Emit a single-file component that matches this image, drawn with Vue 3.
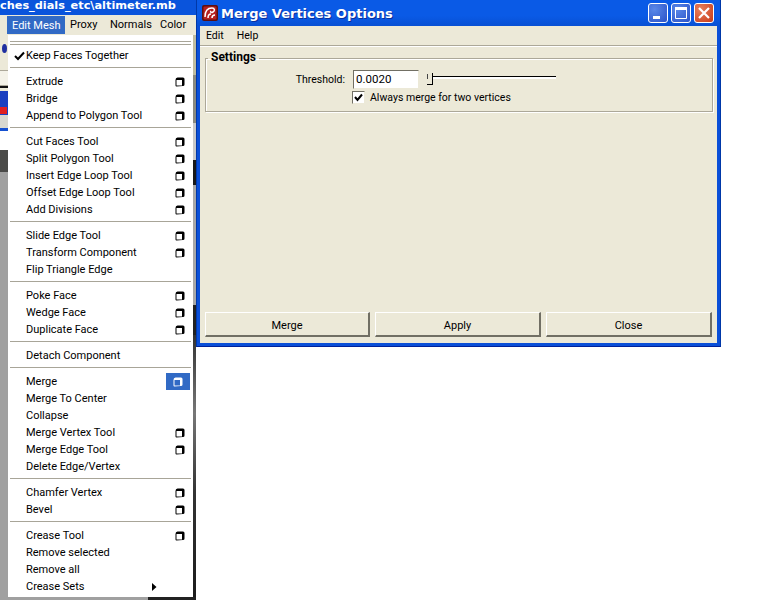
<template>
  <div class="desktop">
    <!-- Maya main window, mostly hidden behind the open menu -->
    <div class="maya">
      <div class="maya-title">ches_dials_etc\altimeter.mb</div>
      <div class="maya-menubar">
        <span class="maya-menu active">Edit Mesh</span>
        <span class="maya-menu proxy">Proxy</span>
        <span class="maya-menu normals">Normals</span>
        <span class="maya-menu">Color</span>
      </div>
      <div class="maya-body">
        <div class="left-strip">
          <div class="scrap beige"><i class="blue-glyph"></i></div>
          <div class="scrap field"></div>
          <div class="scrap black-line"></div>
          <div class="scrap icons"><i class="red-glyph"></i></div>
          <div class="scrap grey"></div>
          <div class="scrap blue-line"></div>
          <div class="scrap white"></div>
          <div class="scrap cube"></div>
          <div class="scrap rest"></div>
        </div>
        <div class="menu">
          <div class="tearoff"></div>
          <template v-for="(group, g) in menuGroups" :key="g">
            <div v-if="g > 0" class="sep"></div>
            <div v-for="item in group" :key="item.name" class="menu-row">
              <svg v-if="item.checked" class="check" width="11" height="10" viewBox="0 0 11 10">
                <path d="M1 5 L4 8 L10 1.5" fill="none" stroke="#000" stroke-width="2" />
              </svg>
              <span class="menu-label">{{ item.name }}</span>
              <svg v-if="item.sub" class="arrow" width="5" height="8" viewBox="0 0 5 8">
                <path d="M0 0 L4.5 4 L0 8 Z" fill="#000" />
              </svg>
              <span v-if="item.option" class="opt" :class="{ hot: item.hot }">
                <svg width="10" height="10" viewBox="0 0 10 10">
                  <path d="M2.5 0.5 H8 Q9.5 0.5 9.5 2 V7.5 Q9.5 9 8 9 L1.5 9.5 Q0.5 9.5 0.5 8.5 V3 Q0.5 0.5 2.5 0.5 Z" :fill="item.hot ? '#fff' : '#000'" />
                  <rect x="1.5" y="3" width="5.5" height="5.5" :fill="item.hot ? '#316ac5' : '#fff'" />
                </svg>
              </span>
            </div>
          </template>
        </div>
        <div class="right-strip">
          <div class="rs rs-a"></div>
          <div class="rs rs-b"></div>
          <div class="rs rs-c"></div>
          <div class="rs rs-d"></div>
          <div class="rs rs-e"></div>
          <div class="rs rs-f"></div>
          <div class="rs rs-g"></div>
        </div>
      </div>
      <div class="maya-bottom"><div class="bottom-grey"></div><div class="bottom-dark"></div></div>
    </div>

    <!-- option dialog -->
    <div class="dialog">
      <div class="titlebar">
        <svg class="app-icon" width="16" height="16" viewBox="0 0 16 16">
          <rect width="16" height="16" rx="2" fill="#5c1010" />
          <rect x="1.5" y="1.5" width="13" height="13" rx="1" fill="#b52020" />
          <path d="M3 12 C3 6 6 3 10 3 C13 3 13 6 11 7 C9 8 8 7 9 6 M6 13 C6 10 7 9 9 9 M10 13 C10 11 11 10 13 10" fill="none" stroke="#fff" stroke-width="1.5" />
        </svg>
        <span class="title-text">Merge Vertices Options</span>
        <div class="caption-btns">
          <span class="cap blue">
            <svg width="20" height="20" viewBox="0 0 20 20"><rect x="5" y="13" width="7" height="3" fill="#fff" /></svg>
          </span>
          <span class="cap blue">
            <svg width="20" height="20" viewBox="0 0 20 20"><path d="M4.5 5 H15.5 V15.5 H4.5 Z" fill="none" stroke="#fff" /><rect x="4" y="4" width="12" height="3" fill="#fff" /></svg>
          </span>
          <span class="cap red">
            <svg width="20" height="20" viewBox="0 0 20 20"><path d="M5 5 L15 15 M15 5 L5 15" stroke="#fff" stroke-width="2.2" /></svg>
          </span>
        </div>
      </div>
      <div class="client">
        <div class="dlg-menubar">
          <span>Edit</span>
          <span>Help</span>
        </div>
        <div class="content">
          <fieldset class="settings">
            <legend>Settings</legend>
            <div class="threshold-row">
              <label class="thr-label">Threshold:</label>
              <input class="thr-input" type="text" value="0.0020" />
              <div class="slider">
                <div class="slider-tick"></div>
                <div class="slider-handle"></div>
                <div class="slider-track"></div>
              </div>
            </div>
            <div class="check-row">
              <span class="checkbox">
                <svg width="9" height="9" viewBox="0 0 9 9"><path d="M1 4 L3.5 7 L8 1.5" fill="none" stroke="#000" stroke-width="2" /></svg>
              </span>
              <span>Always merge for two vertices</span>
            </div>
          </fieldset>
          <div class="buttons">
            <button v-for="b in buttons" :key="b" class="dlg-btn">{{ b }}</button>
          </div>
        </div>
      </div>
    </div>
  </div>
</template>

<script setup>
const opt = (name) => ({ name, option: true })
const plain = (name) => ({ name })

const menuGroups = [
  [{ name: 'Keep Faces Together', checked: true }],
  [opt('Extrude'), opt('Bridge'), opt('Append to Polygon Tool')],
  [opt('Cut Faces Tool'), opt('Split Polygon Tool'), opt('Insert Edge Loop Tool'), opt('Offset Edge Loop Tool'), opt('Add Divisions')],
  [opt('Slide Edge Tool'), opt('Transform Component'), plain('Flip Triangle Edge')],
  [opt('Poke Face'), opt('Wedge Face'), opt('Duplicate Face')],
  [plain('Detach Component')],
  [
    { name: 'Merge', option: true, hot: true },
    plain('Merge To Center'),
    plain('Collapse'),
    opt('Merge Vertex Tool'),
    opt('Merge Edge Tool'),
    plain('Delete Edge/Vertex'),
  ],
  [opt('Chamfer Vertex'), opt('Bevel')],
  [opt('Crease Tool'), plain('Remove selected'), plain('Remove all'), { name: 'Crease Sets', sub: true }],
]

const buttons = ['Merge', 'Apply', 'Close']
</script>

<style>
html, body {
  margin: 0;
  background: #fff;
}
</style>

<style scoped>
.desktop {
  position: relative;
  width: 783px;
  height: 600px;
  overflow: hidden;
  background: #fff;
  font-family: Roboto, "Liberation Sans", sans-serif;
  font-size: 11px;
  color: #000;
}

/* ---- main window ---- */
.maya {
  position: absolute;
  left: 0;
  top: 0;
  width: 196px;
  height: 600px;
  display: flex;
  flex-direction: column;
}

.maya-title {
  height: 15px;
  background: #0a54dc;
  color: #fff;
  font: bold 11.3px/11px "DejaVu Sans", sans-serif;
  white-space: nowrap;
}

.maya-menubar {
  height: 20px;
  display: flex;
  align-items: center;
  padding-left: 7px;
  background: #ece9d8;
  line-height: 20px;
}

.maya-menu {
  padding: 0 5px;
  white-space: nowrap;
}

.maya-menu.active {
  width: 48px;
  height: 18px;
  background: #316ac5;
  color: #fff;
}

.maya-menu.proxy {
  width: 30px;
}

.maya-menu.normals {
  width: 40px;
}

.maya-body {
  display: flex;
  height: 562px;
}

.left-strip {
  width: 8px;
  display: flex;
  flex-direction: column;
  background: #a0a0a0;
}

.scrap {
  flex: none;
  position: relative;
  overflow: hidden;
}

.beige { height: 35px; background: #ece9d8; }
.field { height: 16px; background: #f4f2e8; border-top: 1px solid #aca899; border-bottom: 1px solid #aca899; box-sizing: border-box; }
.black-line { height: 5px; border-top: 2px solid #111; background: #ece9d8; box-sizing: border-box; }
.icons { height: 24px; background: #1a3fc0; }
.grey { height: 13px; background: #d8d8d0; }
.blue-line { height: 3px; background: #1450d0; }
.white { height: 19px; background: #fff; }
.cube { height: 22px; background: #4a4a48; }
.rest { flex: 1; background: #a0a0a0; }

.blue-glyph {
  position: absolute;
  left: 2px;
  top: 9px;
  width: 5px;
  height: 9px;
  border-radius: 50%;
  background: #2030a0;
}

.red-glyph {
  position: absolute;
  left: 0;
  bottom: 1px;
  width: 7px;
  height: 7px;
  background: #e02020;
}

.menu {
  width: 185px;
  height: 562px;
  box-sizing: border-box;
  background: #fff;
  padding-top: 6px;
}

.tearoff {
  height: 4px;
  margin: 0 2px 2px;
  box-sizing: border-box;
  border-top: 1px solid #a8a598;
  border-bottom: 1px solid #a8a598;
}

.menu-row {
  position: relative;
  height: 17px;
  line-height: 17px;
  padding-left: 18px;
}

.sep {
  height: 9px;
  box-sizing: border-box;
  padding-top: 3px;
}

.sep::after {
  content: "";
  display: block;
  height: 1px;
  margin: 0 2px;
  background: #a8a598;
}

.check {
  position: absolute;
  left: 6px;
  top: 4px;
}

.arrow {
  position: absolute;
  left: 144px;
  top: 5px;
}

.opt {
  position: absolute;
  left: 158px;
  top: 0;
  width: 24px;
  height: 17px;
  display: flex;
  align-items: center;
  justify-content: center;
}

.opt svg {
  margin-left: 3px;
}

.opt.hot {
  background: #316ac5;
}

.opt.hot svg {
  margin-left: 0;
}

.right-strip {
  width: 3px;
  display: flex;
  flex-direction: column;
}

.rs { flex: none; }
.rs-a { height: 40px; background: #c0bda0; }
.rs-b { height: 48px; background: #8a8a80; }
.rs-c { height: 37px; background: #c8c8c8; }
.rs-d { height: 25px; background: #1a1a1a; }
.rs-e { height: 120px; background: #a8a8a8; }
.rs-f { height: 30px; background: #222; }
.rs-g { flex: 1; background: linear-gradient(#333, #777 30%, #333 60%, #1c1c1c); }

.maya-bottom {
  flex: 1;
  display: flex;
}

.bottom-grey {
  width: 148px;
  background: #a0a0a0;
}

.bottom-dark {
  flex: 1;
  background: #222;
}

/* ---- option dialog ---- */
.dialog {
  position: absolute;
  left: 196px;
  top: 0;
  width: 525px;
  height: 347px;
  display: flex;
  flex-direction: column;
  box-sizing: border-box;
  background: #0a4fd8;
  border-left: 1px solid #0038a8;
  border-right: 1px solid #0038a8;
  border-bottom: 1px solid #00229a;
  padding: 0 3px 3px;
}

.titlebar {
  height: 26px;
  flex: none;
  display: flex;
  align-items: center;
  margin: 0 -3px;
  padding: 0 6px 0 5px;
  background: linear-gradient(#0a5ae6, #0a5ae6 60%, #0850d4);
}

.app-icon {
  flex: none;
}

.title-text {
  margin-left: 3px;
  color: #fff;
  font: bold 13px "DejaVu Sans", sans-serif;
  text-shadow: 1px 1px 0 #0a2f9c;
}

.caption-btns {
  margin-left: auto;
  display: flex;
  gap: 3px;
}

.cap {
  width: 20px;
  height: 20px;
  box-sizing: border-box;
  display: flex;
  align-items: center;
  justify-content: center;
  border: 1px solid #fff;
  border-radius: 3px;
  overflow: hidden;
}

.cap svg {
  flex: none;
}

.cap.blue {
  background: radial-gradient(circle at 30% 30%, #5a88e8, #2a52c8);
}

.cap.red {
  background: radial-gradient(circle at 30% 30%, #e8805c, #c83a18);
}

.client {
  flex: 1;
  display: flex;
  flex-direction: column;
  background: #ece9d8;
  font-size: 10.5px;
}

.dlg-menubar {
  height: 19px;
  flex: none;
  display: flex;
  align-items: center;
  gap: 13px;
  padding-left: 6px;
  border-bottom: 1px solid #aca899;
  box-shadow: 0 1px 0 #fff;
}

.content {
  flex: 1;
  display: flex;
  flex-direction: column;
  padding: 6px 5px 6px;
}

.settings {
  margin: 0 -1px 0 0;
  height: 60px;
  box-sizing: border-box;
  padding: 0;
  border: 1px solid #aca899;
  box-shadow: 1px 1px 0 #fff, inset 1px 1px 0 #fff;
}

.settings legend {
  position: relative;
  top: -1px;
  margin-left: 2px;
  padding: 0 3px;
  font-weight: bold;
  font-size: 12px;
  line-height: 13px;
}

.threshold-row {
  display: flex;
  align-items: center;
  height: 19px;
  margin-top: 5px;
}

.thr-label {
  width: 139px;
  padding-bottom: 1px;
  text-align: right;
}

.thr-input {
  width: 66px;
  height: 19px;
  margin: 0 0 0 8px;
  box-sizing: border-box;
  padding: 0 2px 2px;
  border: 1px solid #716f64;
  border-right-color: #ece9d8;
  border-bottom-color: #ece9d8;
  background: #fff;
  outline: none;
  font: inherit;
  font-size: 11.5px;
}

.slider {
  position: relative;
  width: 129px;
  height: 14px;
  margin-left: 8px;
}

.slider-track {
  position: absolute;
  left: 5px;
  right: 0;
  top: 3px;
  height: 3px;
  box-sizing: border-box;
  border-top: 1px solid #000;
  background: #fff;
}

.slider-tick {
  position: absolute;
  left: 0;
  top: 1px;
  width: 1px;
  height: 5px;
  background: #444;
}

.slider-handle {
  position: absolute;
  left: 0;
  top: 0;
  z-index: 1;
  width: 6px;
  height: 12px;
  box-sizing: border-box;
  border-right: 1px solid #000;
  border-bottom: 1px solid #000;
}

.check-row {
  display: flex;
  align-items: center;
  gap: 5px;
  margin: 1px 0 0 146px;
  height: 14px;
}

.checkbox {
  width: 13px;
  height: 13px;
  box-sizing: border-box;
  display: flex;
  align-items: center;
  justify-content: center;
  background: #fff;
  border: 1px solid #716f64;
  border-right-color: #ece9d8;
  border-bottom-color: #ece9d8;
}

.buttons {
  margin-top: auto;
  display: flex;
  gap: 5px;
}

.dlg-btn {
  flex: 0 0 166px;
  height: 25px;
  padding: 2px 0 0;
  background: #ece9d8;
  border: 1px solid #fff;
  border-right: 2px solid #716f64;
  border-bottom: 2px solid #716f64;
  border-radius: 0;
  font: inherit;
  font-size: 11px;
  color: #000;
}

.dlg-btn:first-child {
  flex-basis: 165px;
}
</style>
